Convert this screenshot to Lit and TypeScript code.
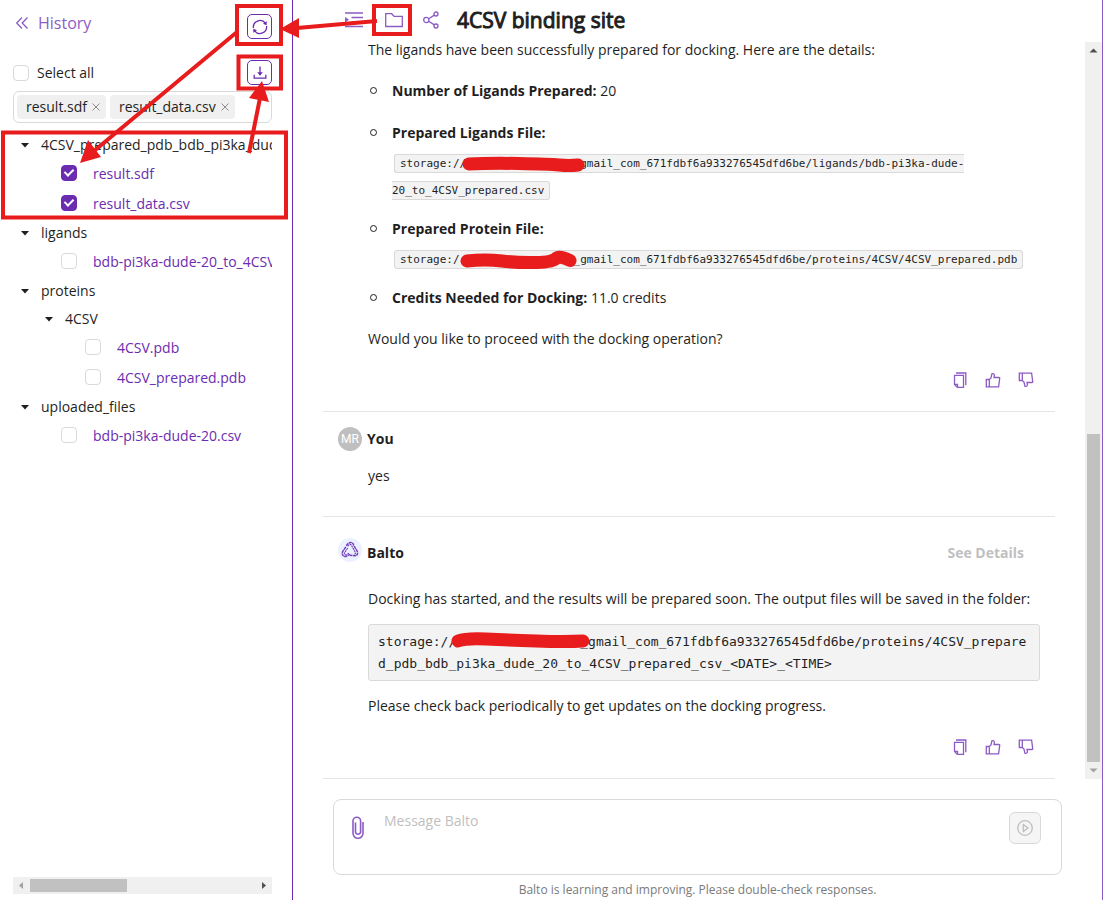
import { LitElement, html, css, svg, nothing } from "lit";
import { customElement, property, state } from "lit/decorators.js";

type Node = { name: string; checked?: boolean; children?: Node[] };

const TREE: Node[] = [
  {
    name: "4CSV_prepared_pdb_bdb_pi3ka_dude_20_to_4CSV_prepared_csv",
    children: [
      { name: "result.sdf", checked: true },
      { name: "result_data.csv", checked: true },
    ],
  },
  { name: "ligands", children: [{ name: "bdb-pi3ka-dude-20_to_4CSV_prepared.csv" }] },
  {
    name: "proteins",
    children: [{ name: "4CSV", children: [{ name: "4CSV.pdb" }, { name: "4CSV_prepared.pdb" }] }],
  },
  { name: "uploaded_files", children: [{ name: "bdb-pi3ka-dude-20.csv" }] },
];

const ICONS = {
  collapse: svg`<path d="M9 2.500L3.700 8 9 13.500M14.500 2.500L9.200 8l5.300 5.500"/>`,
  refresh: svg`<path d="M1.400 9A6.700 6.700 0 0 1 13.400 4.200M14.600 7A6.700 6.700 0 0 1 2.600 11.800"/><path class="solid" d="M14.700 2.300v4l-3.700-1.500zM1.300 13.700v-4L5 11.200z"/>`,
  download: svg`<path d="M8 1.500v8.200M2.200 9.800v3.400h11.600V9.800"/><path class="solid" d="M5.200 7.300h5.600L8 10.800z"/>`,
  indent: svg`<path d="M1 2h18M7.500 6.500H19M7.500 11H19M1 15.500h18"/><path class="solid" d="M1 6l4 2.800-4 2.800z"/>`,
  folder: svg`<path d="M1.700 2.700h6l2.300 2.600h8.300v10.200H1.700z"/>`,
  share: svg`<circle cx="3.300" cy="9" r="2.600"/><circle cx="13" cy="3" r="2"/><circle cx="13" cy="15" r="2"/><path d="M5.600 7.700l5.800-3.600M5.600 10.300l5.800 3.600"/>`,
  copy: svg`<path d="M4 1h9.800v12.300"/><path d="M2.500 3.300h9v12H5.300l-2.800-2.800z"/><path d="M2.700 12.300h2.800v2.800"/>`,
  up: svg`<path d="M1.300 7.500h3v7.300h-3zM4.300 7.500L6 6l.9-4.200c1.700-.6 2.600.4 2.500 1.800L9 5.500h4.900c.6 0 .9.400.8.900l-1.100 8.400H4.300"/>`,
  down: svg`<path d="M1.300 8.500h3V1.200h-3zM4.300 8.500L6 10l.9 4.200c1.700.6 2.600-.4 2.500-1.800L9 10.500h4.900c.6 0 .9-.4.800-.9l-1.100-8.400H4.300"/>`,
  clip: svg`<path d="M13 6v11.300a5 5 0 0 1-10 0V5a3.800 3.800 0 0 1 7.600 0v11.200a2.600 2.600 0 0 1-5.100 0V6.500"/>`,
  send: svg`<circle cx="8" cy="8" r="7.300"/><path d="M6.300 4.600v6.800L11 8z"/>`,
};

const icon = (name: keyof typeof ICONS, w = 16, h = 16) => html`<svg
  class="icon"
  width=${w}
  height=${h}
  viewBox="0 0 ${w} ${h}"
  aria-hidden="true"
>
  ${ICONS[name]}
</svg>`;

const shared = css`
  * {
    box-sizing: border-box;
  }
  button {
    display: inline-flex;
    align-items: center;
    justify-content: center;
    padding: 0;
    border: 0;
    background: none;
    color: #8d5bc5;
    font: inherit;
    cursor: pointer;
  }
  .icon {
    display: block;
    fill: none;
    stroke: currentColor;
    stroke-width: 1.3;
  }
  .solid {
    fill: currentColor;
    stroke: none;
  }
`;

@customElement("file-sidebar")
class FileSidebar extends LitElement {
  @state() private tags = ["result.sdf", "result_data.csv"];

  static styles = [
    shared,
    css`
      :host {
        display: flex;
        flex-direction: column;
        min-height: 0;
        padding: 14px 20px 6px 13px;
        border-right: 1px solid #6b2cb0;
      }
      .row {
        display: flex;
        align-items: center;
        justify-content: space-between;
        height: 25px;
      }
      .back {
        gap: 9px;
        font-size: 16px;
        line-height: 20px;
        padding-bottom: 8px;
      }
      .square {
        width: 25px;
        height: 25px;
        border: 1px solid #6b2cb0;
        border-radius: 5px;
        color: #6b2cb0;
      }
      .select {
        margin-top: 21px;
      }
      label {
        display: flex;
        align-items: center;
        gap: 8px;
      }
      input {
        flex: none;
        position: relative;
        appearance: none;
        width: 16px;
        height: 16px;
        margin: 0;
        border: 1px solid #d9d9d9;
        border-radius: 4px;
        background: #fff;
      }
      input:checked {
        background: #6b2cb0;
        border-color: #6b2cb0;
      }
      input:checked::after {
        content: "";
        position: absolute;
        box-sizing: border-box;
        left: 4px;
        top: 1px;
        width: 6px;
        height: 9px;
        border: solid #fff;
        border-width: 0 2px 2px 0;
        transform: rotate(45deg);
      }
      .tags {
        display: flex;
        gap: 4px;
        height: 32px;
        margin-top: 6px;
        padding: 3px;
        border: 1px solid #d9d9d9;
        border-radius: 6px;
      }
      .tag {
        display: flex;
        align-items: center;
        gap: 4px;
        height: 24px;
        padding: 0 5px 0 9px;
        border-radius: 4px;
        background: #f0f0f0;
      }
      .tag button {
        color: #8c8c8c;
      }
      .tag svg {
        stroke-width: 1;
      }
      .tree {
        flex: 1;
        min-height: 0;
        margin: 8px 0 0;
        padding: 0;
        list-style: none;
        overflow: hidden;
        white-space: nowrap;
      }
      ul ul {
        padding-left: 24px;
        list-style: none;
      }
      .folder {
        display: flex;
        align-items: center;
        gap: 4px;
        height: 28px;
      }
      .folder svg {
        flex: none;
        fill: #1f1f1f;
      }
      .file {
        display: flex;
        align-items: center;
        gap: 16px;
        height: 30px;
        padding-left: 24px;
      }
      .file input {
        margin-bottom: 2px;
      }
      a {
        color: #6b2cb0;
        text-decoration: none;
      }
      .hbar {
        display: flex;
        align-items: center;
        justify-content: space-between;
        height: 17px;
        background: #f0f0f0;
      }
      .thumb {
        width: 37.5%;
        height: 13px;
        margin-right: auto;
        background: #c1c1c1;
      }
    `,
  ];

  private renderNode(node: Node): unknown {
    if (!node.children) {
      return html`<li class="file">
        <input type="checkbox" aria-label=${node.name} .checked=${!!node.checked} />
        <a href="#">${node.name}</a>
      </li>`;
    }
    return html`<li>
      <div class="folder">
        <svg width="24" height="24" viewBox="0 0 24 24"><path d="M8 10h8l-4 4.500z" /></svg>
        <span>${node.name}</span>
      </div>
      <ul>
        ${node.children.map((child) => this.renderNode(child))}
      </ul>
    </li>`;
  }

  render() {
    return html`
      <div class="row">
        <button class="back">${icon("collapse")}History</button>
        <button class="square" aria-label="Refresh files">${icon("refresh")}</button>
      </div>
      <div class="row select">
        <label><input type="checkbox" />Select all</label>
        <button class="square" aria-label="Download">${icon("download")}</button>
      </div>
      <div class="tags">
        ${this.tags.map(
          (tag) => html`<span class="tag"
            >${tag}<button
              aria-label="Remove ${tag}"
              @click=${() => (this.tags = this.tags.filter((t) => t !== tag))}
            >
              <svg class="icon" width="10" height="10" viewBox="0 0 10 10">
                <path d="M1.500 1.500l7 7M8.500 1.500l-7 7" />
              </svg></button
          ></span>`
        )}
      </div>
      <ul class="tree">
        ${TREE.map((node) => this.renderNode(node))}
      </ul>
      <div class="hbar">
        <svg width="17" height="17" viewBox="0 0 17 17"><path fill="#a3a3a3" d="M10 5v7L6 8.500z" /></svg>
        <div class="thumb"></div>
        <svg width="17" height="17" viewBox="0 0 17 17"><path fill="#505050" d="M7 5v7l4-3.500z" /></svg>
      </div>
    `;
  }
}

@customElement("chat-message")
class ChatMessage extends LitElement {
  @property() author = "";
  @property({ type: Boolean }) details = false;
  @property({ type: Boolean }) actions = false;

  static styles = [
    shared,
    css`
      :host {
        display: block;
        border-bottom: 1px solid #e5e5e5;
        padding: 0 15px;
      }
      header {
        display: flex;
        align-items: flex-start;
        gap: 5px;
        padding-top: 15px;
        font-weight: 700;
        line-height: 24px;
      }
      .long {
        padding-top: 21px;
      }
      .long .name,
      .long .more {
        padding-top: 3px;
      }
      .avatar {
        display: flex;
        align-items: center;
        justify-content: center;
        width: 24px;
        height: 24px;
        border-radius: 50%;
        background: #bfbfbf;
        color: #fff;
        font: 12px/24px Roboto, sans-serif;
      }
      .logo {
        background: #ecf1ff;
      }
      .logo svg {
        fill: none;
        stroke: #7440b8;
      }
      .more {
        margin-left: auto;
        padding-right: 16px;
        color: #bfbfbf;
      }
      .body {
        padding-left: 30px;
      }
      .actions {
        display: flex;
        justify-content: flex-end;
        gap: 17px;
        padding: 22px 6px 23px 0;
      }
    `,
  ];

  render() {
    const balto = this.author === "Balto";
    return html`
      ${this.author
        ? html`<header class=${balto ? "long" : ""}>
            ${balto
              ? html`<span class="avatar logo"
                  ><svg width="18" height="18" viewBox="0 0 18 18">
                    <path
                      stroke-width="1.500"
                      stroke-dasharray="3.200 0.500"
                      d="M5.500 5C6.500 1 12 0 12.500 4l3.600 6c1.600 3.500-.8 5.200-3.600 4.600L9 14.200M4.800 6L1.800 10.300c-1.700 3 .4 5.600 3.400 5.100l3.800-2"
                    />
                    <path
                      stroke-width="1.100"
                      stroke-dasharray="2 0.600"
                      d="M6.800 5.200C8 3 10 2.600 10.800 5l3.400 6.200c.6 1.200 0 2-1.400 1.800M6.600 7l-3.200 5c-.5 1.400.6 2.200 2 1.800L8 12.200"
                    /></svg
                ></span>`
              : html`<span class="avatar">MR</span>`}
            <span class="name">${this.author}</span>
            ${this.details ? html`<button class="more">See Details</button>` : nothing}
          </header>`
        : nothing}
      <div class="body"><slot></slot></div>
      ${this.actions
        ? html`<div class="actions">
            <button aria-label="Copy">${icon("copy")}</button>
            <button aria-label="Good response">${icon("up")}</button>
            <button aria-label="Bad response">${icon("down")}</button>
          </div>`
        : nothing}
    `;
  }
}

@customElement("app-root")
class AppRoot extends LitElement {
  static styles = [
    shared,
    css`
      :host {
        position: relative;
        display: grid;
        grid-template-columns: 293px minmax(0, 1fr);
        height: 100vh;
        overflow: hidden;
        background: #fff;
        color: #1f1f1f;
        font: 14px/22px "Open Sans", "Noto Sans", sans-serif;
      }
      main {
        display: flex;
        flex-direction: column;
        min-height: 0;
        border-right: 1px solid #8d5bc5;
      }
      .top {
        display: flex;
        align-items: center;
        height: 39px;
        padding-left: 51px;
        gap: 20px;
      }
      h1 {
        margin: 0 0 0 -4px;
        font-size: 21px;
        line-height: 28px;
        font-weight: 400;
        -webkit-text-stroke: 1px currentColor;
      }
      .scroll {
        flex: 1;
        display: flex;
        min-height: 0;
      }
      .feed {
        flex: 1;
        min-width: 0;
        padding: 0 30px;
        overflow: hidden;
      }
      .vbar {
        display: flex;
        flex-direction: column;
        align-items: center;
        width: 17px;
        margin-top: 3px;
        background: #f0f0f0;
      }
      .vthumb {
        width: 13px;
        height: 44.5%;
        margin-top: auto;
        background: #c1c1c1;
      }
      p {
        margin: 0;
      }
      .list {
        margin: 16px 0 17px;
        padding-left: 24px;
        list-style: none;
        line-height: 27px;
      }
      .list li + li {
        margin-top: 15px;
      }
      .list li::before {
        content: "";
        float: left;
        box-sizing: border-box;
        width: 7px;
        height: 7px;
        margin: 10px 0 0 -22px;
        border: 1px solid #1f1f1f;
        border-radius: 50%;
      }
      code,
      pre {
        font-family: "DejaVu Sans Mono", monospace;
        border: 1px solid #d9d9d9;
        border-radius: 3px;
        background: #f3f3f3;
      }
      code {
        margin: 0 2px;
        padding: 2px 5px;
        font-size: 11px;
        line-height: 18px;
        vertical-align: -2px;
      }
      pre {
        margin: 14px 0;
        padding: 6px 9px 5px;
        font-size: 13px;
        line-height: 22px;
        white-space: pre-wrap;
        word-break: break-all;
      }
      .hidden {
        position: relative;
        padding-left: 114px;
      }
      .hidden.wide {
        padding-left: 124px;
      }
      .hidden svg {
        position: absolute;
        left: -6px;
        top: 0;
        overflow: visible;
        fill: none;
        stroke: #e81c1c;
        stroke-linecap: round;
        stroke-linejoin: round;
        stroke-width: 13;
      }
      .yes {
        padding: 14px 0 29px;
      }
      .reply {
        padding-top: 23px;
      }
      .composer {
        display: flex;
        align-items: flex-start;
        height: 76px;
        margin: 20px 40px 0;
        padding: 10px 20px 10px 16px;
        border: 1px solid #d9d9d9;
        border-radius: 8px;
      }
      .attach {
        padding-top: 6px;
      }
      .attach svg {
        stroke-width: 1.600;
      }
      textarea {
        flex: 1;
        height: 54px;
        margin: 0 16px 0 19px;
        padding: 0;
        border: 0;
        outline: 0;
        resize: none;
        background: none;
        font: inherit;
      }
      textarea::placeholder {
        color: #bfbfbf;
      }
      .send {
        width: 32px;
        height: 32px;
        margin-top: 2px;
        border: 1px solid #d9d9d9;
        border-radius: 6px;
        background: #f5f5f5;
        color: #bfbfbf;
      }
      .note {
        padding-top: 5px;
        text-align: center;
        font-size: 12px;
        line-height: 20px;
        color: #7a7a7a;
      }
      .marks {
        position: absolute;
        left: 0;
        top: 0;
        pointer-events: none;
        fill: none;
        stroke: #e81c1c;
        stroke-width: 4;
      }
      .marks .head {
        fill: #e81c1c;
        stroke: none;
      }
    `,
  ];

  render() {
    return html`
      <file-sidebar></file-sidebar>
      <main>
        <div class="top">
          <button aria-label="Toggle sidebar">${icon("indent", 20, 18)}</button>
          <button aria-label="Files">${icon("folder", 19, 18)}</button>
          <button aria-label="Share">${icon("share", 18, 18)}</button>
          <h1>4CSV binding site</h1>
        </div>
        <div class="scroll">
          <div class="feed">
            <chat-message actions>
              <p>The ligands have been successfully prepared for docking. Here are the details:</p>
              <ul class="list">
                <li><strong>Number of Ligands Prepared:</strong> 20</li>
                <li>
                  <strong>Prepared Ligands File:</strong><br />
                  <code
                    >storage://<span class="hidden"
                      ><svg width="124" height="14"><path d="M9 7q20-1 50-.500t40 1.500 19 0" /></svg></span
                    >gmail_com_671fdbf6a933276545dfd6be/ligands/bdb-pi3ka-dude-20_to_4CSV_prepared.csv</code
                  >
                </li>
                <li>
                  <strong>Prepared Protein File:</strong><br />
                  <code
                    >storage:/<span class="hidden"
                      ><svg width="124" height="14"><path d="M13 8q18-2 35 0t34 1.500 20-4 14 2" /></svg></span
                    >_gmail_com_671fdbf6a933276545dfd6be/proteins/4CSV/4CSV_prepared.pdb</code
                  >
                </li>
                <li><strong>Credits Needed for Docking:</strong> 11.0 credits</li>
              </ul>
              <p>Would you like to proceed with the docking operation?</p>
            </chat-message>
            <chat-message author="You"><p class="yes">yes</p></chat-message>
            <chat-message author="Balto" details actions>
              <p class="reply">
                Docking has started, and the results will be prepared soon. The output files will be saved in the folder:
              </p>
              <pre>storage://<span class="hidden wide"><svg width="138" height="14"><path d="M8 7q8-3 28-2t50 2 47 0" /></svg></span>_gmail_com_671fdbf6a933276545dfd6be/proteins/4CSV_prepared_pdb_bdb_pi3ka_dude_20_to_4CSV_prepared_csv_&lt;DATE&gt;_&lt;TIME&gt;</pre>
              <p>Please check back periodically to get updates on the docking progress.</p>
            </chat-message>
          </div>
          <div class="vbar">
            <svg width="17" height="17" viewBox="0 0 17 17"><path fill="#505050" d="M4.500 10.500h8l-4-4z" /></svg>
            <div class="vthumb"></div>
            <svg width="17" height="17" viewBox="0 0 17 17"><path fill="#a3a3a3" d="M4.500 6.500h8l-4 4z" /></svg>
          </div>
        </div>
        <div class="composer">
          <button class="attach" aria-label="Attach file">${icon("clip", 15, 24)}</button>
          <textarea aria-label="Message Balto" placeholder="Message Balto"></textarea>
          <button class="send" aria-label="Send" disabled>${icon("send")}</button>
        </div>
        <div class="note">Balto is learning and improving. Please double-check responses.</div>
      </main>
      <svg class="marks" width="420" height="224" viewBox="0 0 420 224" aria-hidden="true">
        <rect x="237" y="6" width="44" height="38" />
        <rect x="238.500" y="56.500" width="42.500" height="32" />
        <rect x="3" y="132.500" width="283" height="85" />
        <rect x="374" y="6" width="36" height="28" />
        <path d="M237 32L94 151M249 153l11-55M377 21l-80 7" />
        <path class="head" d="M80 163l8-23 13 17zM262 81l-13 17 20 4zM280 29l19-11v20z" />
      </svg>
    `;
  }
}
